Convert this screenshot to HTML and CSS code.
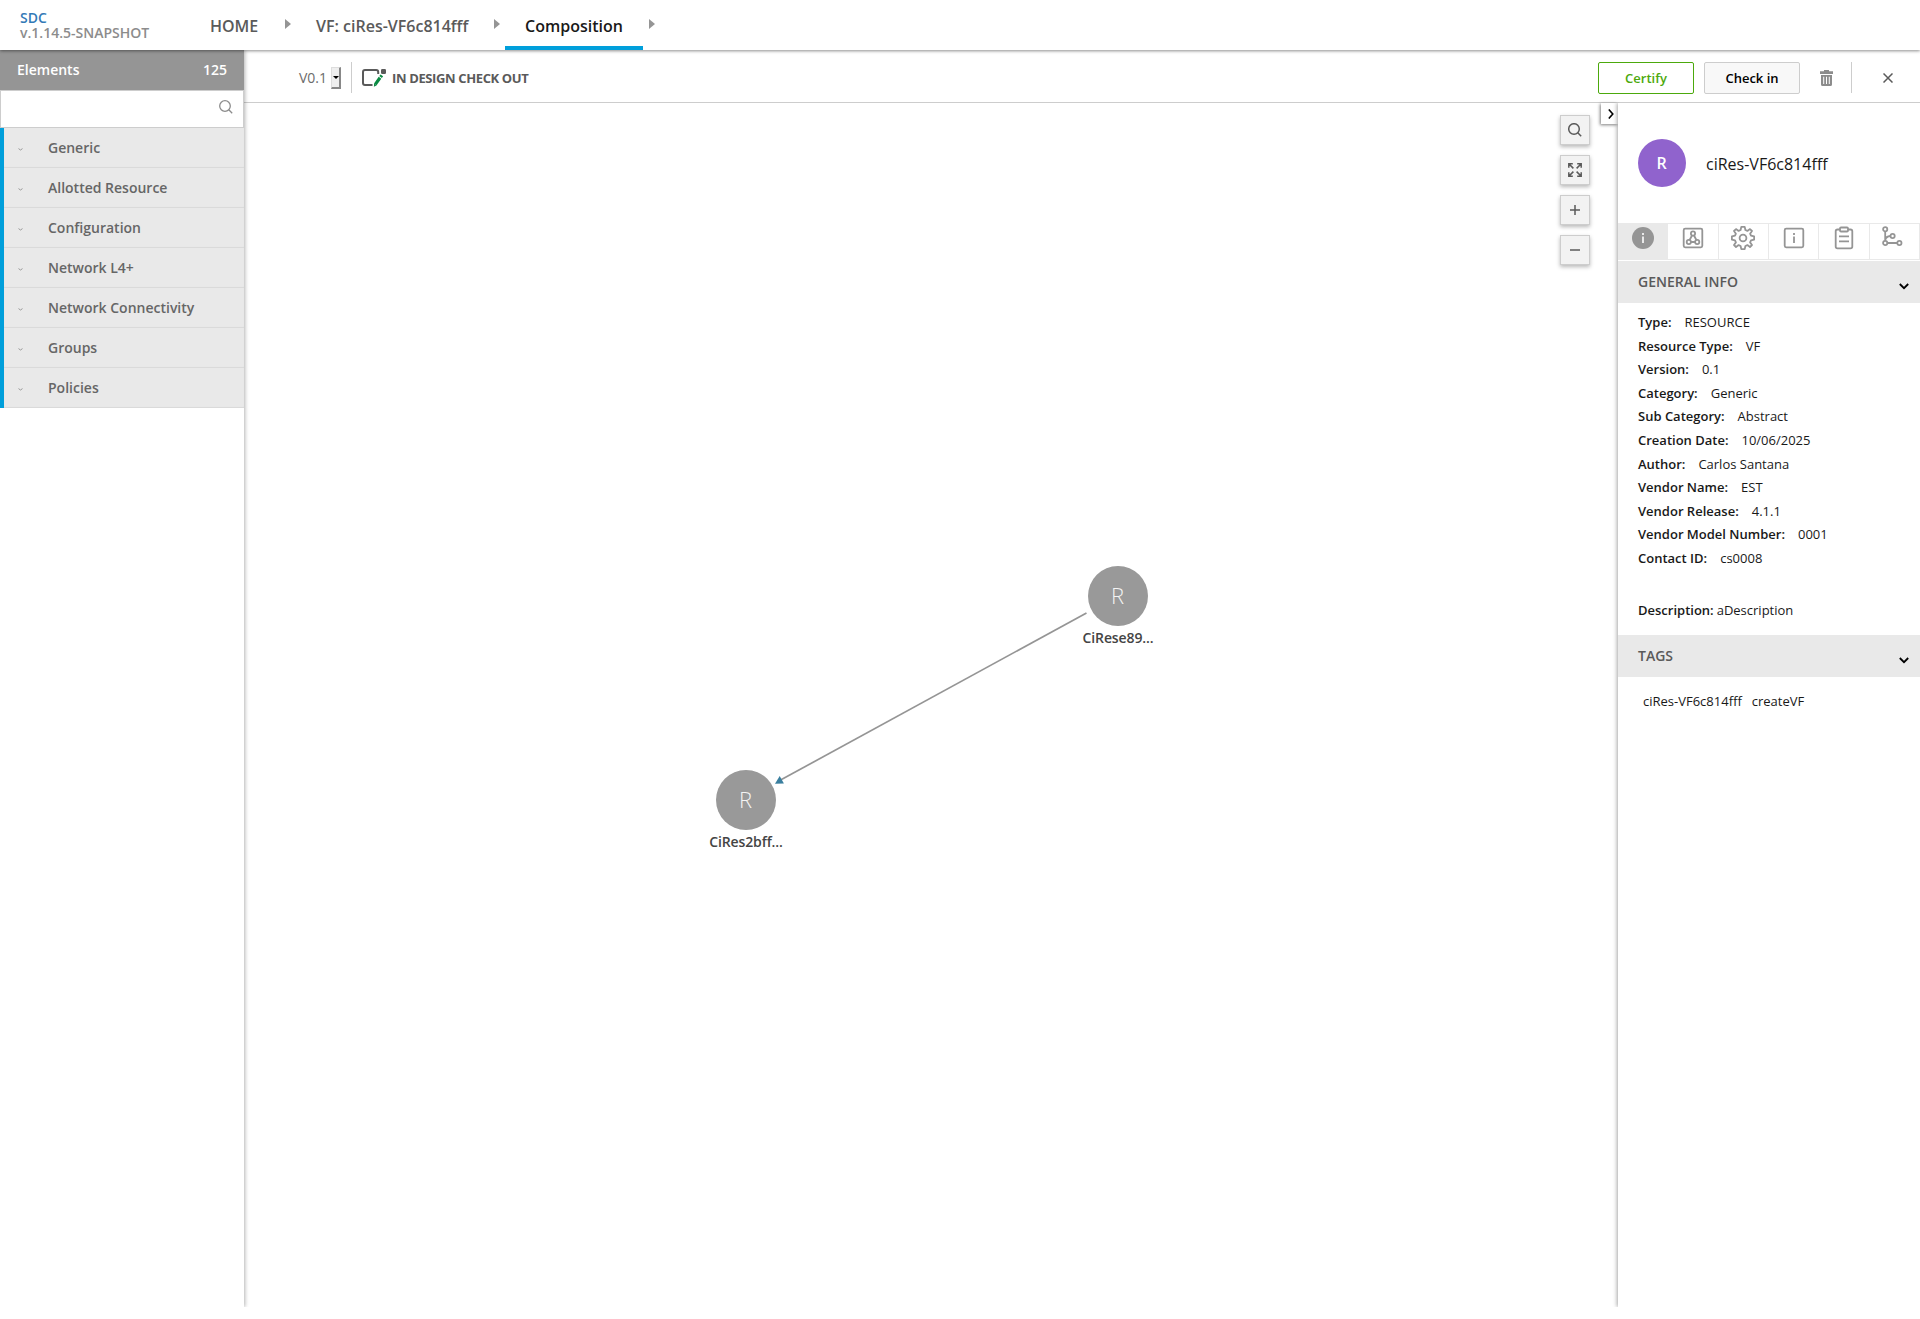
FILE: index.html
```html
<!DOCTYPE html>
<html lang="en">
<head>
<meta charset="utf-8">
<title>SDC - Composition</title>
<link rel="stylesheet" href="styles.css">
</head>
<body>
<header class="top-nav">
  <div class="brand"><a class="brand-name">SDC</a><span class="brand-version">v.1.14.5-SNAPSHOT</span></div>
  <nav class="crumbs">
    <span class="crumb home">HOME</span><i class="arrow"></i>
    <span class="crumb resource">VF: ciRes-VF6c814fff</span><i class="arrow"></i>
    <span class="crumb active">Composition</span><i class="arrow"></i>
  </nav>
</header>
<div class="layout">
  <aside class="palette">
    <div class="palette-head"><span>Elements</span><span>125</span></div>
    <div class="palette-search">
      <svg width="14" height="14" viewBox="0 0 14 14" fill="none" stroke="#8c8c8c" stroke-width="1.3"><circle cx="6" cy="6" r="5.3"/><path d="M9.8 9.8l3.4 3.4"/></svg>
    </div>
    <ul class="palette-list">
      <li><svg class="caret" viewBox="0 0 5 3"><path d="M.5 .6L2.5 2L4.5 .6"/></svg>Generic</li>
      <li><svg class="caret" viewBox="0 0 5 3"><path d="M.5 .6L2.5 2L4.5 .6"/></svg>Allotted Resource</li>
      <li><svg class="caret" viewBox="0 0 5 3"><path d="M.5 .6L2.5 2L4.5 .6"/></svg>Configuration</li>
      <li><svg class="caret" viewBox="0 0 5 3"><path d="M.5 .6L2.5 2L4.5 .6"/></svg>Network L4+</li>
      <li><svg class="caret" viewBox="0 0 5 3"><path d="M.5 .6L2.5 2L4.5 .6"/></svg>Network Connectivity</li>
      <li><svg class="caret" viewBox="0 0 5 3"><path d="M.5 .6L2.5 2L4.5 .6"/></svg>Groups</li>
      <li><svg class="caret" viewBox="0 0 5 3"><path d="M.5 .6L2.5 2L4.5 .6"/></svg>Policies</li>
    </ul>
  </aside>
  <main class="workspace">
    <div class="toolbar">
      <span class="version">V0.1</span>
      <span class="version-select"><i></i></span>
      <span class="divider version-divider"></span>
      <svg class="status-icon" width="24" height="18" viewBox="0 0 24 18">
        <path d="M16.2 5V3Q16.2 1 14.2 1H3Q1 1 1 3V14Q1 16 3 16H10.5" fill="none" stroke="#5a5a5a" stroke-width="2"/>
        <rect x="19" y="0" width="5" height="5" rx="1.2" fill="#5a5a5a"/>
        <path d="M13.3 15.4L18 8.8M18.6 8L19.8 6.3" stroke="#0a8a43" stroke-width="3.2"/>
        <path d="M11.9 17.8L12.1 14.4L14.8 16.2Z" fill="#0a8a43"/>
      </svg>
      <span class="status">IN DESIGN CHECK OUT</span>
      <div class="actions">
        <button class="btn certify">Certify</button>
        <button class="btn checkin">Check in</button>
        <svg class="trash" width="13" height="16" viewBox="0 0 13 16"><path fill="#8c8c8c" fill-rule="evenodd" d="M4 0H9V1.3H13V4H0V1.3H4ZM1 5H12V14.5Q12 16 10.5 16H2.5Q1 16 1 14.5ZM3.2 6.7V14H4.2V6.7ZM6 6.7V14H7V6.7ZM8.8 6.7V14H9.8V6.7Z"/></svg>
        <span class="divider"></span>
        <svg class="close" width="10" height="10" viewBox="0 0 10 10"><path d="M.5 .5L9.5 9.5M9.5 .5L.5 9.5" stroke="#5a5a5a" stroke-width="1.5"/></svg>
      </div>
    </div>
    <div class="content">
      <section class="canvas">
        <svg class="link" width="320" height="180" viewBox="0 0 320 180"><path d="M315.5 8L10 174.8" stroke="#959595" stroke-width="1.7"/><path d="M4 178.8L8.7 171L12.9 178.5Z" fill="#3a7f9f"/></svg>
        <div class="node node-source"><span class="node-icon">R</span><span class="node-label">CiRese89...</span></div>
        <div class="node node-target"><span class="node-icon">R</span><span class="node-label">CiRes2bff...</span></div>
        <div class="zoom-tools">
          <button><svg width="14" height="14" viewBox="0 0 14 14"><circle cx="6" cy="6" r="5.3"/><path d="M9.8 9.8l3.4 3.4"/></svg></button>
          <button><svg width="14" height="14" viewBox="0 0 14 14"><path d="M.8 4.8V.8H4.8M9.2 .8H13.2V4.8M13.2 9.2V13.2H9.2M4.8 13.2H.8V9.2M1 1L5.4 5.4M13 1L8.6 5.4M13 13L8.6 8.6M1 13L5.4 8.6"/></svg></button>
          <button><svg width="14" height="14" viewBox="0 0 14 14"><path d="M2 7H12M7 2V12"/></svg></button>
          <button><svg width="14" height="14" viewBox="0 0 14 14"><path d="M2 7H12"/></svg></button>
        </div>
        <button class="collapse"><svg width="6" height="10" viewBox="0 0 6 10"><path d="M.8 .5L4.8 5L.8 9.5" fill="none" stroke="#000" stroke-width="1.6"/></svg></button>
      </section>
      <aside class="details">
        <div class="details-head"><span class="avatar">R</span><span class="details-name">ciRes-VF6c814fff</span></div>
        <div class="tabs">
          <span class="tab selected"><svg width="24" height="24" viewBox="0 0 24 24"><circle cx="12" cy="12" r="11" fill="#959595"/><path d="M11 7H13V9H11ZM11 10.5H13V17H11Z" fill="#e9e9e9"/></svg></span>
          <span class="tab"><svg width="24" height="24" viewBox="0 0 24 24"><rect x="2.7" y="2.7" width="18.6" height="18.6" rx="1.5"/><circle cx="12" cy="7.5" r="2.1"/><circle cx="7.8" cy="16" r="2.1"/><circle cx="16.2" cy="16" r="2.1"/><path d="M11 9.5L8.6 14M13 9.5L15.4 14M10 16H14"/></svg></span>
          <span class="tab"><svg width="24" height="24" viewBox="0 0 24 24"><circle cx="12" cy="12" r="3.4"/><path d="M10.3 .9H13.7L14.4 4L16.4 4.9L19 3.1L21 5L19.1 7.7L20 9.7L23.1 10.3V13.7L20 14.4L19.1 16.4L21 19L19 21L16.4 19.1L14.4 20L13.7 23.1H10.3L9.6 20L7.6 19.1L5 21L3 19L4.9 16.4L4 14.4L.9 13.7V10.3L4 9.7L4.9 7.7L3 5L5 3.1L7.6 4.9L9.6 4Z" stroke-linejoin="round"/></svg></span>
          <span class="tab"><svg width="24" height="24" viewBox="0 0 24 24"><rect x="2.7" y="2.7" width="18.6" height="18.6" rx="1.5"/><path d="M12 7V9M12 10.5V17"/></svg></span>
          <span class="tab"><svg width="24" height="24" viewBox="0 0 24 24"><path d="M8 3.5H5.5Q3.7 3.5 3.7 5.3V20.5Q3.7 22.3 5.5 22.3H18.5Q20.3 22.3 20.3 20.5V5.3Q20.3 3.5 18.5 3.5H16"/><rect x="8" y="1.5" width="8" height="4" rx="1"/><path d="M7 10.3H17M7 15.3H17"/></svg></span>
          <span class="tab"><svg width="24" height="24" viewBox="0 0 24 24"><circle cx="3.2" cy="3.2" r="2.1"/><circle cx="3.2" cy="17" r="2.1"/><circle cx="17.4" cy="17" r="2.1"/><circle cx="10.6" cy="10" r="2.1"/><path d="M3.2 5.4V14.8M5.4 17H15.2M3.4 13.6Q4 10.5 8.4 10"/></svg></span>
        </div>
        <h2 class="section-title">GENERAL INFO<svg width="10" height="7" viewBox="0 0 10 7"><path d="M.8 1L5 5.2L9.2 1"/></svg></h2>
        <div class="info">
          <p><b>Type:</b><span>RESOURCE</span></p>
          <p><b>Resource Type:</b><span>VF</span></p>
          <p><b>Version:</b><span>0.1</span></p>
          <p><b>Category:</b><span>Generic</span></p>
          <p><b>Sub Category:</b><span>Abstract</span></p>
          <p><b>Creation Date:</b><span>10/06/2025</span></p>
          <p><b>Author:</b><span>Carlos Santana</span></p>
          <p><b>Vendor Name:</b><span>EST</span></p>
          <p><b>Vendor Release:</b><span>4.1.1</span></p>
          <p><b>Vendor Model Number:</b><span>0001</span></p>
          <p><b>Contact ID:</b><span>cs0008</span></p>
          <p class="description"><b>Description:</b> aDescription</p>
        </div>
        <h2 class="section-title">TAGS<svg width="10" height="7" viewBox="0 0 10 7"><path d="M.8 1L5 5.2L9.2 1"/></svg></h2>
        <div class="tags"><span>ciRes-VF6c814fff</span><span>createVF</span></div>
      </aside>
    </div>
  </main>
</div>
</body>
</html>
```
FILE: styles.css
```css
* { box-sizing: border-box; }
body { margin: 0; height: 1319px; overflow: hidden; background: #fff; color: #191919; font: 13px/18px "Open Sans", "Noto Sans", sans-serif; }
ul, p, h2 { margin: 0; padding: 0; list-style: none; }
svg { display: block; flex: none; }
button { padding: 0; font-family: inherit; }

.top-nav { position: relative; z-index: 3; display: flex; height: 50px; background: #fff; box-shadow: 0 1px 3px rgba(0,0,0,.45); }
.brand { display: flex; flex-direction: column; width: 210px; padding: 10px 0 0 20px; font-size: 14px; line-height: 15px; font-weight: 600; color: #8c8c8c; }
.brand-name { color: #337ab7; }
.crumbs { display: flex; }
.crumb { font-size: 16px; line-height: 52px; height: 50px; font-weight: 600; color: #5a5a5a; white-space: nowrap; }
.home { width: 75px; }
.resource { width: 178px; margin-left: 25px; }
.arrow { width: 0; height: 0; margin-top: 19px; border: 5px solid transparent; border-left: 6px solid #959595; border-right: 0; }
.active { width: 138px; padding-left: 20px; margin: 0 6px 0 5px; color: #191919; border-bottom: 4px solid #009fdb; }

.layout { display: flex; height: 1257px; }
.palette { position: relative; z-index: 2; width: 244px; background: #fff; box-shadow: 1px 0 4px rgba(0,0,0,.3); clip-path: inset(0 -8px 0 0); }
.palette-head { display: flex; justify-content: space-between; height: 40px; padding: 0 17px; background: #959595; color: #fff; font-size: 14px; line-height: 40px; font-weight: 600; }
.palette-search { display: flex; justify-content: flex-end; height: 38px; padding: 9px 10px; border: 1px solid #cdcdcd; }
.palette-list li { display: flex; align-items: center; height: 40px; padding-left: 14px; border-left: 4px solid #009fdb; background: #e9e9e9; color: #666; font-size: 14px; font-weight: 600; box-shadow: inset 0 -1px 1px rgba(0,0,0,.07); }
.caret { width: 5px; height: 3px; margin: 2px 25px 0 0; fill: none; stroke: #999; }

.workspace { display: flex; flex-direction: column; flex: 1; min-width: 0; }
.toolbar { display: flex; align-items: center; height: 53px; padding: 3px 27px 0 55px; border-bottom: 1px solid #cdcdcd; flex: none; }
.version { width: 32px; padding-top: 1px; font-size: 14px; color: #6c6c6c; }
.version-select { display: flex; align-items: center; justify-content: center; width: 10px; height: 22px; background: #efefef; border: 1px solid #ddd; border-right: 2px solid #888; border-bottom: 2px solid #888; }
.version-select i { border: 3.5px solid transparent; border-top-color: #000; border-bottom: 0; flex: none; }
.divider { width: 1px; height: 31px; background: #cdcdcd; }
.version-divider { margin: 0 10px; }
.status { margin-left: 6px; font-weight: 700; letter-spacing: -.37px; color: #5a5a5a; }
.actions { display: flex; align-items: center; margin-left: auto; }
.btn { width: 96px; height: 32px; margin-right: 10px; border: 1px solid #cdcdcd; border-radius: 2px; background: #f8f8f8; color: #000; font-size: 13px; font-weight: 600; }
.certify { border-color: #4ca90c; background: #fff; color: #4ca90c; }
.trash { margin: 0 18px 0 10px; }
.close { margin-left: 31px; }

.content { display: flex; flex: 1; }
.canvas { position: relative; flex: 1; }
.zoom-tools { position: absolute; top: 12px; right: 28px; display: grid; gap: 10px; }
.zoom-tools button { display: grid; place-items: center; width: 30px; height: 30px; border: 1px solid #cdcdcd; background: #f2f2f2; box-shadow: 0 2px 4px rgba(0,0,0,.28); }
.zoom-tools svg { fill: none; stroke: #5a5a5a; stroke-width: 1.5; }
.collapse { position: absolute; top: 0; right: 0; display: grid; place-items: center end; width: 17px; height: 21px; padding: 1px 4px 0 0; border: 0; background: #fff; box-shadow: -1px 1px 3px rgba(0,0,0,.5); }
.node { position: absolute; display: flex; flex-direction: column; align-items: center; width: 90px; }
.node-source { left: 829px; top: 462px; }
.node-target { left: 457px; top: 666px; }
.node-icon { width: 60px; height: 60px; margin-top: 1px; border-radius: 50%; background: #999; color: #f4f4f4; text-align: center; text-indent: -1px; font-size: 22px; line-height: 58px; font-weight: 300; }
.node-label { margin-top: 3px; font-size: 14px; line-height: 18px; font-weight: 600; letter-spacing: -.12px; color: #444; }
.link { position: absolute; left: 527px; top: 502px; fill: none; }

.details { position: relative; z-index: 1; width: 302px; background: #fff; box-shadow: -1px 0 4px rgba(0,0,0,.35); clip-path: inset(0 0 0 -8px); }
.details-head { display: flex; align-items: center; height: 120px; padding: 0 20px; gap: 20px; }
.avatar { width: 48px; height: 48px; border-radius: 50%; background: #9063cd; color: #fff; text-align: center; text-indent: -1px; font-size: 16px; line-height: 48px; font-weight: 600; }
.details-name { font-size: 16px; line-height: 22px; padding-top: 2px; }
.tabs { display: grid; grid-template-columns: repeat(6, 1fr); height: 37px; border-top: 1px solid #e9e9e9; border-bottom: 1px solid #e9e9e9; margin-bottom: 1px; }
.tab { display: flex; justify-content: center; padding-top: 2px; border-right: 1px solid #e9e9e9; }
.tab.selected { background: #e9e9e9; }
.tab svg { fill: none; stroke: #959595; stroke-width: 1.8; }
.tab.selected svg { stroke: none; }
.section-title { display: flex; justify-content: space-between; height: 42px; padding: 0 11px 0 20px; background: #e9e9e9; color: #5a5a5a; font-size: 14px; line-height: 42px; font-weight: 600; }
.section-title svg { margin-top: 22px; fill: none; stroke: #000; stroke-width: 1.8; }
.info { height: 332px; padding: 8px 20px 0; }
.info p { display: flex; height: 23.6px; line-height: 23.6px; }
.info b { font-weight: 600; margin-right: 13px; }
.info .description { margin-top: 28px; }
.info .description b { margin-right: 3px; }
.tags { display: flex; gap: 10px; padding: 15px 25px; }
```
